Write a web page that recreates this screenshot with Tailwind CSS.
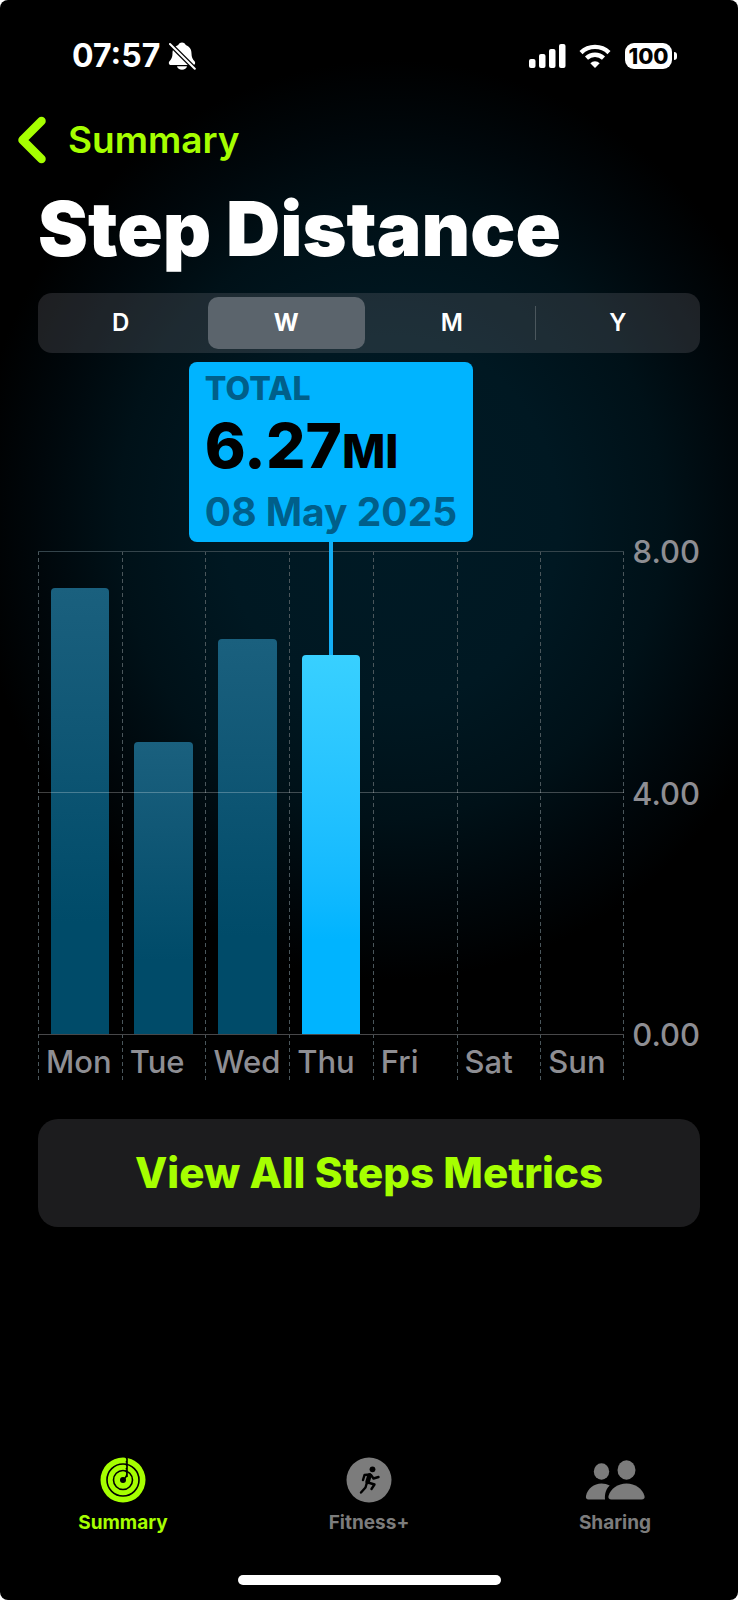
<!DOCTYPE html>
<html lang="en">
<head>
<meta charset="utf-8">
<meta name="viewport" content="width=device-width, initial-scale=1">
<title>Step Distance</title>
<script src="https://cdn.jsdelivr.net/npm/@tailwindcss/browser@4"></script>
</head>
<body class="bg-white">
<div class="flex min-h-screen flex-col overflow-hidden rounded-lg bg-black bg-[radial-gradient(ellipse_420px_460px_at_53%_520px,#001a25_0%,#001822_40%,#001118_65%,#00070b_84%,#000_100%)] font-['Inter','Liberation_Sans',sans-serif] text-white">

  <!-- Status bar -->
  <div class="flex h-[112px] items-center justify-between pr-[61px] pl-[72px]">
    <div class="flex items-center gap-2">
      <span class="text-[32px] leading-[38px] font-bold">07:57</span>
      <svg class="h-7 w-7" viewBox="0 0 28 28" role="img" aria-label="Silent">
        <path fill="#fff" d="M14 .5c-1.900 0-3.300 1.100-3.700 2.600C6 4.600 4.500 8 4.500 11.500c0 4-1.200 5.700-3 7.700-1.300 1.400-.6 3.800 1.500 3.800h22c2.100 0 2.800-2.400 1.500-3.800-1.800-2-3-3.700-3-7.700 0-3.500-1.500-6.900-5.800-8.400C17.300 1.600 15.900.5 14 .5zM9 24.300h10c-.4 2-2.500 3.500-5 3.500s-4.600-1.500-5-3.500z"/>
        <path stroke="#000" stroke-width="4.600" d="M0 0l28 28"/>
        <path stroke="#fff" stroke-width="2" stroke-linecap="round" d="M2 2l24.800 24.800"/>
      </svg>
    </div>
    <div class="flex items-center">
      <svg class="h-6 w-[37px]" viewBox="0 0 37 24" fill="#fff" role="img" aria-label="Signal">
        <rect x="0" y="15" width="6.500" height="9" rx="2"/><rect x="10" y="10" width="6.500" height="14" rx="2"/><rect x="20" y="5" width="6.500" height="19" rx="2"/><rect x="30" y="0" width="6.500" height="24" rx="2"/>
      </svg>
      <svg class="ml-[13px] h-6 w-8" viewBox="0 0 32 24" fill="none" stroke="#fff" stroke-width="4.400" role="img" aria-label="Wi-Fi">
        <path d="M2 8.600a20 20 0 0 1 28 0"/><path d="M7.500 14.200a12.300 12.300 0 0 1 17 0"/>
        <path fill="#fff" stroke="none" d="M16 24l-4.700-4.800a6.800 6.800 0 0 1 9.400 0z"/>
      </svg>
      <div class="ml-[14px] flex h-[26px] w-[47px] items-center justify-center rounded-[9px] bg-white text-[22px] leading-[26px] font-extrabold text-black">100</div>
      <div class="ml-[2px] h-2 w-[3px] rounded-r-full bg-white"></div>
    </div>
  </div>

  <!-- Navigation -->
  <a href="#" class="flex h-[56px] items-center gap-[21px] self-start pl-[17px] text-[#a6ff00]">
    <svg class="h-[48px] w-[30px]" viewBox="0 0 30 48" fill="none" stroke="currentColor" stroke-width="8.500" stroke-linecap="round" stroke-linejoin="round" aria-hidden="true"><path d="M24.500 5L5.500 24l19 19"/></svg>
    <span class="text-[37px] leading-[46px] font-semibold">Summary</span>
  </a>

  <main class="flex flex-1 flex-col px-[38px]">
    <h1 class="mt-4 text-[75px] leading-[90px] font-black">Step Distance</h1>

    <!-- Range picker -->
    <div class="mt-[19px] grid h-[60px] grid-cols-4 rounded-[14px] bg-[#767680]/25 py-1 text-[24px] leading-[30px] font-semibold" role="group" aria-label="Range">
      <button>D</button>
      <button class="mx-1 rounded-[10px] bg-[#5b646c] font-bold" aria-pressed="true">W</button>
      <button>M</button>
      <button class="flex items-center"><span class="h-[34px] w-px bg-white/20"></span><span class="flex-1">Y</span></button>
    </div>

    <!-- Selected day -->
    <div class="mt-[9px] mr-[76px] flex flex-col items-center">
      <div class="flex h-[180px] flex-col rounded-lg bg-[#00b4ff] px-4 pt-[7px] text-[#005f8a]">
        <div class="text-[32px] leading-[40px] font-extrabold">TOTAL</div>
        <div class="text-[62px] leading-[74px] font-extrabold text-black">6.27<span class="text-[46px]">MI</span></div>
        <div class="text-[39px] leading-[48px] font-bold">08 May 2025</div>
      </div>
      <div class="h-[9px] w-1 bg-[#14aef5]"></div>
    </div>

    <!-- Chart -->
    <div class="flex text-[31px] leading-[38px] font-medium text-[#8e8e93]">
      <div class="relative flex-1">
        <div class="absolute inset-x-0 top-0 h-px bg-[#34444b]"></div>
        <div class="grid grid-cols-7 bg-[repeating-linear-gradient(#4a565b_0_4px,transparent_4px_7px)] bg-[length:1px_100%] bg-right bg-no-repeat [&>div]:bg-[repeating-linear-gradient(#4a565b_0_4px,transparent_4px_7px)] [&>div]:bg-[length:1px_100%] [&>div]:bg-no-repeat">
          <div><div class="flex h-[483px] flex-col items-center justify-end"><div class="w-[70%] rounded-t bg-linear-to-b from-[#1a607e] to-[#004b69] to-75%" style="height:446px"></div></div><div class="h-[48px] pt-[9px] pl-2">Mon</div></div>
          <div><div class="flex h-[483px] flex-col items-center justify-end"><div class="w-[70%] rounded-t bg-linear-to-b from-[#1a607e] to-[#004b69] to-75%" style="height:292px"></div></div><div class="h-[48px] pt-[9px] pl-2">Tue</div></div>
          <div><div class="flex h-[483px] flex-col items-center justify-end"><div class="w-[70%] rounded-t bg-linear-to-b from-[#1a607e] to-[#004b69] to-75%" style="height:395px"></div></div><div class="h-[48px] pt-[9px] pl-2">Wed</div></div>
          <div><div class="relative z-10 flex h-[483px] flex-col items-center"><div class="w-1 flex-1 bg-[#14aef5]"></div><div class="w-[70%] rounded-t bg-linear-to-b from-[#38d0ff] to-[#00b4ff] to-75%" style="height:379px"></div></div><div class="h-[48px] pt-[9px] pl-2">Thu</div></div>
          <div><div class="h-[483px]"></div><div class="h-[48px] pt-[9px] pl-2">Fri</div></div>
          <div><div class="h-[483px]"></div><div class="h-[48px] pt-[9px] pl-2">Sat</div></div>
          <div><div class="h-[483px]"></div><div class="h-[48px] pt-[9px] pl-2">Sun</div></div>
        </div>
        <div class="absolute inset-x-0 top-[241px] h-px bg-white/25"></div>
        <div class="absolute inset-x-0 top-[483px] h-px bg-[#48484a]"></div>
      </div>
      <div class="-mt-[18px] flex h-[521px] w-[76px] flex-col justify-between text-right">
        <span>8.00</span><span>4.00</span><span>0.00</span>
      </div>
    </div>

    <button class="mt-[37px] h-[108px] rounded-[20px] bg-[#1c1c1e] text-[42px] leading-[50px] font-extrabold text-[#a6ff00]">View All Steps Metrics</button>
  </main>

  <!-- Tab bar -->
  <nav class="grid grid-cols-3 text-[19px] leading-6 font-bold text-[#7c7c7c]">
    <a href="#" class="flex flex-col items-center gap-2 text-[#a6ff00]" aria-current="page">
      <svg class="h-[46px] w-[46px]" viewBox="0 0 46 46" aria-hidden="true">
        <circle cx="23" cy="23" r="22.500" fill="currentColor"/>
        <g fill="none" stroke="#000" stroke-width="1.600"><circle cx="23" cy="23" r="16"/><circle cx="23" cy="23" r="9.500"/></g>
        <circle cx="23" cy="23" r="3" fill="#000"/>
        <path d="M25.500 0q3 2.500.5 5.500M25.500 7q3 2.500.5 5.500M25.500 13.500q3 3 0 7L23 23M27 0v20" fill="none" stroke="#000" stroke-width="1.600"/>
      </svg>
      Summary
    </a>
    <a href="#" class="flex flex-col items-center gap-2">
      <svg class="h-[46px] w-[46px]" viewBox="0 0 46 46" aria-hidden="true">
        <circle cx="23" cy="23" r="22.500" fill="currentColor"/>
        <circle cx="26.500" cy="12.300" r="2.900"/>
        <g fill="none" stroke="#000" stroke-linecap="round" stroke-linejoin="round">
          <path stroke-width="4.500" d="M23.500 18.500L21.500 25"/>
          <path stroke-width="2.400" d="M24 17.500l-5.500.5-1.500 5M25 18l2.500 3.500 5-1.500M22 25.500l6.500 2-3 4.500M20.500 27l-1 3.500-4.500 5"/>
        </g>
      </svg>
      Fitness+
    </a>
    <a href="#" class="flex flex-col items-center gap-2">
      <svg class="h-[46px] w-[60px]" viewBox="0 0 60 46" fill="currentColor" aria-hidden="true">
        <ellipse cx="16.500" cy="14.500" rx="7.700" ry="8.200"/><ellipse cx="41.500" cy="13" rx="9" ry="9.700"/>
        <path d="M3.500 42.500C1.500 42.500.5 41 1 39c1.500-7.500 8-12.500 15.500-12.500 3 0 5.800.7 8.200 2C21.500 31.500 19.500 36 20 42.500z"/>
        <path d="M26.500 42.500c-2.500 0-3.500-1.500-3-3.500C25.500 31.500 33 26.500 41.500 26.500S57.500 31.500 59.500 39c.5 2-.5 3.500-3 3.500z"/>
      </svg>
      Sharing
    </a>
  </nav>
  <div class="mx-auto mt-[40px] mb-[15px] h-[10px] w-[263px] rounded-full bg-white"></div>
</div>
</body>
</html>
